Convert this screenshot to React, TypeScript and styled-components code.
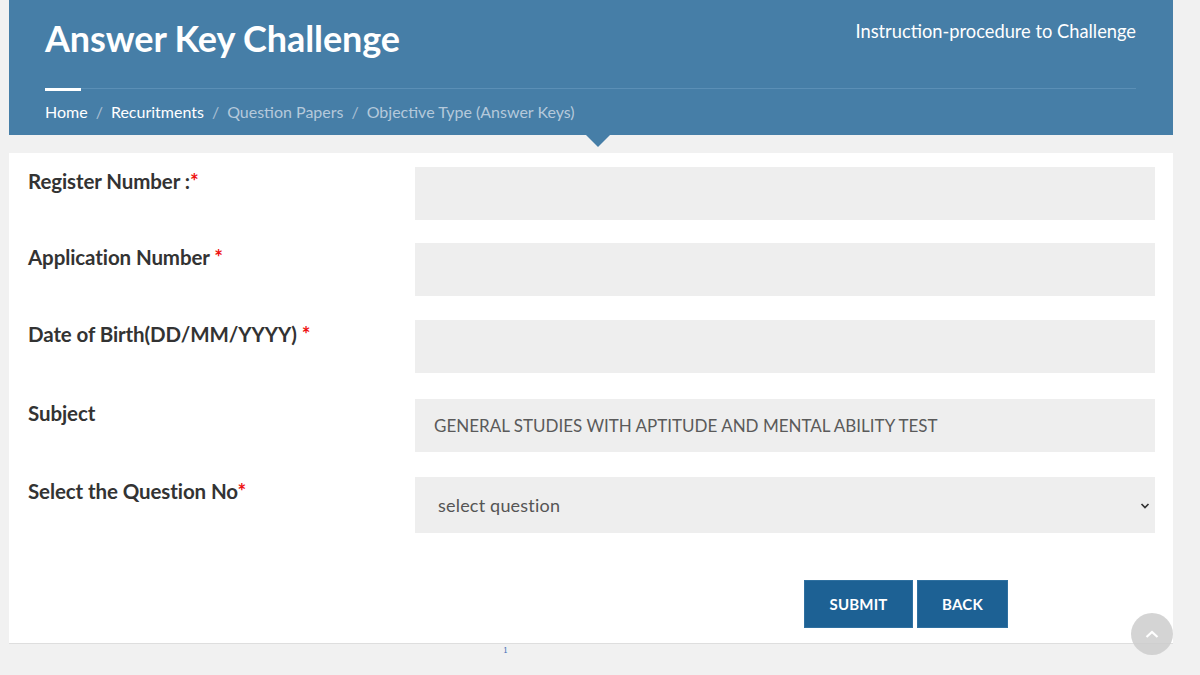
import React from "react";
import styled, { createGlobalStyle } from "styled-components";

const Global = createGlobalStyle`
  html, body { margin: 0; padding: 0; background: #f1f1f1; }
  body { font-family: Lato, "Open Sans", Arial, sans-serif; }
  * { box-sizing: border-box; }
`;

const Page = styled.div`
  width: 1200px;
  height: 675px;
  padding: 0 27px 0 9px;
  overflow: hidden;
`;

const Header = styled.header`
  position: relative;
  height: 135px;
  background: #467ea7;
  padding: 0 37px 0 36px;
  display: flex;
  flex-direction: column;
  &::after {
    content: "";
    position: absolute;
    left: 577px;
    bottom: -12px;
    border-left: 12px solid transparent;
    border-right: 12px solid transparent;
    border-top: 12px solid #467ea7;
  }
`;

const TopRow = styled.div`
  display: flex;
  justify-content: space-between;
  align-items: flex-start;
`;

const Title = styled.h1`
  margin: 17px 0 0;
  color: #fff;
  font-size: 36px;
  font-weight: 700;
  line-height: 42px;
  letter-spacing: -0.1px;
`;

const InstructionLink = styled.a`
  margin-top: 19px;
  color: #fff;
  font-size: 18.3px;
  line-height: 24px;
  text-decoration: none;
`;

const Divider = styled.div`
  margin-top: 29px;
  height: 3px;
  display: flex;
  align-items: flex-start;
`;

const DividerAccent = styled.span`
  width: 36px;
  height: 3px;
  background: #fff;
`;

const DividerLine = styled.span`
  flex: 1;
  height: 1px;
  background: #5b8fb6;
`;

const Crumbs = styled.nav`
  margin-top: 11px;
  display: flex;
  align-items: center;
  font-size: 16px;
  line-height: 20px;
`;

const Crumb = styled.span<{ $active?: boolean }>`
  color: ${(p) => (p.$active ? "#ffffff" : "#b5c9db")};
`;

const Sep = styled.span`
  color: #a9bfd3;
  margin: 0 8px;
`;

const Card = styled.main`
  margin-top: 18px;
  background: #fff;
  padding: 14px 18px 15px 19px;
  border-bottom: 1px solid #dedede;
  display: flex;
  flex-direction: column;
`;

const Row = styled.div<{ $gap?: number }>`
  display: grid;
  grid-template-columns: 387px 1fr;
  align-items: start;
  margin-top: ${(p) => p.$gap ?? 0}px;
`;

const Label = styled.label`
  font-size: 20.5px;
  font-weight: 700;
  color: #333;
  line-height: 28px;
  letter-spacing: -0.1px;
`;

const Star = styled.span`
  color: #ee1111;
`;

const Field = styled.div<{ $h?: number }>`
  position: relative;
  height: ${(p) => p.$h ?? 53}px;
  background: #eeeeee;
`;

const Input = styled.input`
  width: 100%;
  height: 100%;
  border: 0;
  background: transparent;
  padding: 0 19px;
  font-family: inherit;
  font-size: 17px;
  color: #555;
  outline: none;
`;

const SubjectValue = styled.div`
  height: 100%;
  display: flex;
  align-items: center;
  padding: 0 19px;
  font-size: 17px;
  color: #5a5a5a;
`;

const Select = styled.select`
  appearance: none;
  -webkit-appearance: none;
  width: 100%;
  height: 100%;
  border: 0;
  background: transparent;
  padding: 0 23px;
  font-family: inherit;
  font-size: 18px;
  letter-spacing: 0.2px;
  color: #555;
  outline: none;
`;

const Chevron = styled.svg`
  position: absolute;
  right: 5px;
  top: 25px;
  pointer-events: none;
`;

const Actions = styled.div`
  grid-column: 2;
  display: flex;
  gap: 4px;
  padding-left: 389px;
  margin-top: 47px;
`;

const Button = styled.button<{ $w: number }>`
  width: ${(p) => p.$w}px;
  height: 48px;
  border: 1px solid #2f70a0;
  background: #1d6194;
  color: #fff;
  font-family: inherit;
  font-size: 15px;
  font-weight: 700;
  text-transform: uppercase;
  letter-spacing: 0.2px;
  cursor: pointer;
`;

const PageNote = styled.div`
  padding-left: 494px;
  font-family: "DejaVu Serif", serif;
  font-size: 8px;
  line-height: 14px;
  color: #4a72b8;
`;

const ScrollTop = styled.button`
  position: fixed;
  right: 27px;
  bottom: 20px;
  width: 42px;
  height: 42px;
  border-radius: 50%;
  border: 0;
  background: rgba(205, 205, 205, 0.85);
  display: flex;
  align-items: center;
  justify-content: center;
`;

export default function App() {
  return (
    <>
      <Global />
      <Page>
        <Header>
          <TopRow>
            <Title>Answer Key Challenge</Title>
            <InstructionLink>Instruction-procedure to Challenge</InstructionLink>
          </TopRow>
          <Divider>
            <DividerAccent />
            <DividerLine />
          </Divider>
          <Crumbs>
            <Crumb $active>Home</Crumb>
            <Sep>/</Sep>
            <Crumb $active>Recuritments</Crumb>
            <Sep>/</Sep>
            <Crumb>Question Papers</Crumb>
            <Sep>/</Sep>
            <Crumb>Objective Type (Answer Keys)</Crumb>
          </Crumbs>
        </Header>
        <Card>
          <Row>
            <Label>
              Register Number :<Star>*</Star>
            </Label>
            <Field>
              <Input />
            </Field>
          </Row>
          <Row $gap={23}>
            <Label>
              Application Number <Star>*</Star>
            </Label>
            <Field>
              <Input />
            </Field>
          </Row>
          <Row $gap={24}>
            <Label>
              Date of Birth(DD/MM/YYYY) <Star>*</Star>
            </Label>
            <Field>
              <Input />
            </Field>
          </Row>
          <Row $gap={26}>
            <Label>Subject</Label>
            <Field>
              <SubjectValue>GENERAL STUDIES WITH APTITUDE AND MENTAL ABILITY TEST</SubjectValue>
            </Field>
          </Row>
          <Row $gap={25}>
            <Label>
              Select the Question No<Star>*</Star>
            </Label>
            <Field $h={56}>
              <Select defaultValue="">
                <option value="">select question</option>
              </Select>
              <Chevron width="10" height="8" viewBox="0 0 10 8">
                <path d="M1.5 2 L5 5.5 L8.5 2" fill="none" stroke="#333" strokeWidth="1.7" />
              </Chevron>
            </Field>
            <Actions>
              <Button $w={109}>Submit</Button>
              <Button $w={91}>Back</Button>
            </Actions>
          </Row>
        </Card>
        <PageNote>1</PageNote>
      </Page>
      <ScrollTop aria-label="Back to top">
        <svg width="16" height="10" viewBox="0 0 16 10">
          <path d="M2.5 8 L8 3 L13.5 8" fill="none" stroke="#fff" strokeWidth="2.2" />
        </svg>
      </ScrollTop>
    </>
  );
}
